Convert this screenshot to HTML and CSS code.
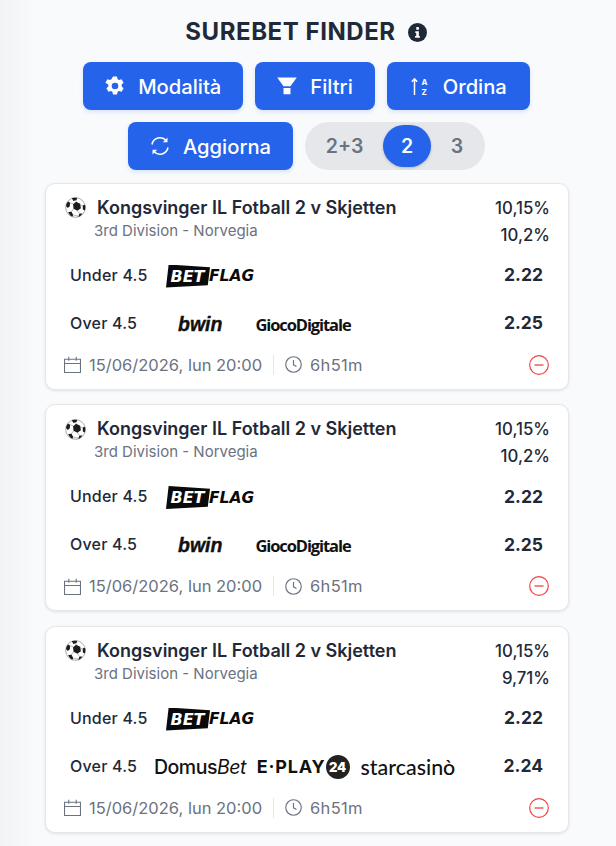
FILE: index.html
```html
<!DOCTYPE html>
<html lang="it">
<head>
<meta charset="utf-8">
<title>Surebet Finder</title>
<link rel="stylesheet" href="styles.css">
</head>
<body>
<svg class="defs" width="0" height="0" aria-hidden="true">
  <symbol id="ball" viewBox="0 0 20 20">
    <circle cx="10" cy="10" r="9.4" fill="#fff" stroke="#9a9a9a" stroke-width=".8"/>
    <path d="M10.500 4.500l4 2 .6 4.200-3.300 2.300-3.700-1.800-.4-4.400z" fill="#1c1c1c"/>
    <path d="M6.500 1.300C7.500.8 10 .6 11.500 1L11 2.800 8 3.800zM1 8.600C1.200 7 1.800 5.500 3 4.300L4.800 5.500 4.600 8.800 2.500 10.500zM19.200 7.800C19.600 9.500 19.400 11.500 18.800 12.800L17 12 16.900 8.400 18 7.300zM3 14.300L6.200 14.100 7.800 17.200 7 18.800C5.200 18 3.900 16.500 3 14.300zM16.500 15.600L13.800 15.800 12.600 18.800C14.200 18.500 15.600 17.400 16.500 15.600z" fill="#1c1c1c"/>
    <path d="M10.500 4.500V3M7.700 6.500L4.800 5.500M15 8l2 .4M8.100 11.200l-2 3M11.800 13l2 2.800M7.800 17.200l4.800 1" stroke="#777" stroke-width=".5" fill="none"/>
  </symbol>
  <symbol id="cal" viewBox="0 0 16 16">
    <path d="M.5 3h15v12.500H.5zM.5 7h15M4.500 .8v3.700M11.500 .8v3.700" fill="none" stroke="currentColor" stroke-width="1"/>
  </symbol>
  <symbol id="clock" viewBox="0 0 16 16">
    <circle cx="8" cy="8" r="7.300" fill="none" stroke="currentColor" stroke-width="1.100"/>
    <path d="M8 3.800v4.500l2.800 1.600" fill="none" stroke="currentColor" stroke-width="1.100"/>
  </symbol>
  <symbol id="minus" viewBox="0 0 20 20">
    <circle cx="10" cy="10" r="9.300" fill="none" stroke="currentColor" stroke-width="1.200"/>
    <path d="M5.500 10h9" stroke="currentColor" stroke-width="1.300"/>
  </symbol>
</svg>

<main class="page">
  <h1 class="title">SUREBET FINDER
    <svg class="info" viewBox="0 0 20 20"><circle cx="10" cy="10" r="10" fill="#1f2937"/><rect x="8.700" y="4.300" width="2.800" height="2.800" rx=".6" fill="#fff"/><path d="M7.700 8.700h3.700v5h1.100v1.800H7.500v-1.800h1.200v-3.200h-1z" fill="#fff"/></svg>
  </h1>

  <div class="toolbar">
    <button class="btn"><svg class="btn-icon" viewBox="0 0 20 20"><path fill="#fff" fill-rule="evenodd" d="M8 .6h4l.6 2.600 1.500.9 2.500-.8 2 3.500-1.900 1.800v1.800l1.900 1.800-2 3.500-2.500-.8-1.500.9-.6 2.600H8l-.6-2.600-1.500-.9-2.500.8-2-3.500 1.900-1.800V8.600L.4 6.800l2-3.500 2.500.8 1.500-.9zM10 6.700a3.300 3.300 0 1 0 0 6.600 3.300 3.300 0 0 0 0-6.600z"/></svg>Modalità</button>
    <button class="btn"><svg class="btn-icon" viewBox="0 0 20 20"><path fill="#fff" d="M.2 1.500h19.600l-6.300 8.700H6.500zM6.500 12h7v6.200h-7z"/></svg>Filtri</button>
    <button class="btn btn-sort"><svg class="btn-icon" viewBox="0 0 20 20"><path fill="none" stroke="#fff" stroke-width="1.500" d="M5.500 19V3M2.800 5.800L5.500 2.800 8.200 5.800"/><text class="az" x="12.500" y="8.500">A</text><text class="az" x="12.500" y="18.800">Z</text></svg>Ordina</button>
    <button class="btn"><svg class="btn-icon" viewBox="0 0 20 20"><path fill="none" stroke="#fff" stroke-width="1.500" d="M2 8.500A8.200 8.200 0 0 1 16.300 4.700M18 11.500A8.200 8.200 0 0 1 3.700 15.300"/><path fill="#fff" d="M17.500 1.500v4.700h-4.700zM2.500 18.500v-4.700h4.700z"/></svg>Aggiorna</button>
    <div class="segment">
      <span class="seg seg-wide">2+3</span>
      <span class="seg seg-on">2</span>
      <span class="seg seg-last">3</span>
    </div>
  </div>

  <section class="list">
    <article class="card">
      <div class="head">
        <div class="match">
          <div class="match-title"><svg class="ball"><use href="#ball"/></svg>Kongsvinger IL Fotball 2 v Skjetten</div>
          <div class="league">3rd Division - Norvegia</div>
        </div>
        <div class="pct"><span>10,15%</span><span>10,2%</span></div>
      </div>
      <div class="row">
        <span class="market">Under 4.5</span>
        <div class="books"><span class="betflag"><span class="bet">BET</span><span class="flag">FLAG</span></span></div>
        <span class="odd">2.22</span>
      </div>
      <div class="row">
        <span class="market">Over 4.5</span>
        <div class="books books-two"><span class="bwin">bwin</span><span class="gioco">GiocoDigitale</span></div>
        <span class="odd">2.25</span>
      </div>
      <div class="foot">
        <svg class="foot-icon cal-icon"><use href="#cal"/></svg><span>15/06/2026, lun 20:00</span>
        <i class="sep"></i>
        <svg class="foot-icon"><use href="#clock"/></svg><span class="left">6h51m</span>
        <svg class="remove"><use href="#minus"/></svg>
      </div>
    </article>

    <article class="card">
      <div class="head">
        <div class="match">
          <div class="match-title"><svg class="ball"><use href="#ball"/></svg>Kongsvinger IL Fotball 2 v Skjetten</div>
          <div class="league">3rd Division - Norvegia</div>
        </div>
        <div class="pct"><span>10,15%</span><span>10,2%</span></div>
      </div>
      <div class="row">
        <span class="market">Under 4.5</span>
        <div class="books"><span class="betflag"><span class="bet">BET</span><span class="flag">FLAG</span></span></div>
        <span class="odd">2.22</span>
      </div>
      <div class="row">
        <span class="market">Over 4.5</span>
        <div class="books books-two"><span class="bwin">bwin</span><span class="gioco">GiocoDigitale</span></div>
        <span class="odd">2.25</span>
      </div>
      <div class="foot">
        <svg class="foot-icon cal-icon"><use href="#cal"/></svg><span>15/06/2026, lun 20:00</span>
        <i class="sep"></i>
        <svg class="foot-icon"><use href="#clock"/></svg><span class="left">6h51m</span>
        <svg class="remove"><use href="#minus"/></svg>
      </div>
    </article>

    <article class="card">
      <div class="head">
        <div class="match">
          <div class="match-title"><svg class="ball"><use href="#ball"/></svg>Kongsvinger IL Fotball 2 v Skjetten</div>
          <div class="league">3rd Division - Norvegia</div>
        </div>
        <div class="pct"><span>10,15%</span><span>9,71%</span></div>
      </div>
      <div class="row">
        <span class="market">Under 4.5</span>
        <div class="books"><span class="betflag"><span class="bet">BET</span><span class="flag">FLAG</span></span></div>
        <span class="odd">2.22</span>
      </div>
      <div class="row">
        <span class="market">Over 4.5</span>
        <div class="books books-three"><span class="domus">Domus<em>Bet</em></span><span class="eplay">E·PLAY<b>24</b></span><span class="star">starcasinò</span></div>
        <span class="odd">2.24</span>
      </div>
      <div class="foot">
        <svg class="foot-icon cal-icon"><use href="#cal"/></svg><span>15/06/2026, lun 20:00</span>
        <i class="sep"></i>
        <svg class="foot-icon"><use href="#clock"/></svg><span class="left">6h51m</span>
        <svg class="remove"><use href="#minus"/></svg>
      </div>
    </article>
  </section>
</main>
</body>
</html>
```

FILE: styles.css
```css
* { box-sizing: border-box; }
html, body { height: 100%; }
body {
  margin: 0;
  overflow: hidden;
  background: linear-gradient(to right, #f1f3f5, #f8fafc 36px);
  font-family: Inter, "Liberation Sans", sans-serif;
  color: #1f2937;
}
.defs { position: absolute; }
.page { padding: 0 47px 0 45px; }
.title {
  margin: 0;
  padding: 18px 2px 0 0;
  height: 62px;
  display: flex;
  justify-content: center;
  align-items: flex-start;
  gap: 12px;
  font-size: 24px;
  line-height: 28px;
  font-weight: 700;
  letter-spacing: .55px;
  color: #1f2937;
}
.info { width: 19px; height: 19px; margin-top: 5px; }
.toolbar {
  display: flex;
  flex-wrap: wrap;
  justify-content: center;
  gap: 12px;
  margin: 0 -1.500px 0 -2.500px;
}
.btn {
  height: 48px;
  padding: 0 22px;
  display: inline-flex;
  align-items: center;
  gap: 13px;
  border: 0;
  border-radius: 8px;
  background: #2563eb;
  color: #fff;
  font: 500 20.200px Inter, "Liberation Sans", sans-serif;
  box-shadow: 0 2px 4px rgba(37, 99, 235, .15);
}
.btn-sort { padding-right: 23px; gap: 14px; }
.btn-icon { width: 20px; height: 20px; flex: none; }
.az { font: 700 8px Inter, sans-serif; fill: #fff; }
.segment {
  width: 180px;
  height: 48px;
  padding: 3px 6px;
  display: flex;
  align-items: center;
  border-radius: 24px;
  background: #e5e7eb;
}
.seg {
  text-align: center;
  color: #6b7280;
  font-size: 19.500px;
  font-weight: 600;
}
.seg-wide { width: 67px; margin-right: 5px; }
.seg-last { flex: 1; padding-left: 4px; }
.seg-on {
  width: 48px;
  height: 42px;
  line-height: 42px;
  border-radius: 21px;
  background: #2563eb;
  color: #fff;
  box-shadow: 0 1px 3px rgba(0, 0, 0, .2);
}
.list {
  display: flex;
  flex-direction: column;
  gap: 14.5px;
  margin-top: 12.500px;
}
.card {
  height: 207px;
  padding: 12px 18px 0 19px;
  background: #fff;
  border: 1px solid #e5e7eb;
  border-radius: 10px;
  box-shadow: 0 1px 3px rgba(0, 0, 0, .1);
}
.head { display: flex; justify-content: space-between; align-items: flex-start; height: 55px; }
.match-title {
  display: flex;
  align-items: center;
  gap: 11px;
  font-size: 18px;
  font-weight: 600;
  line-height: 24px;
  color: #1f2937;
}
.ball { width: 21px; height: 21px; flex: none; }
.league { margin: 1px 0 0 29px; font-size: 15px; line-height: 20px; color: #6b7280; }
.pct {
  display: flex;
  flex-direction: column;
  align-items: flex-end;
  font-size: 16.800px;
  font-weight: 500;
  line-height: 27px;
  margin-top: -1px;
}
.row {
  display: flex;
  align-items: center;
  height: 48px;
  padding: 0 6px 0 5px;
}
.market { width: 84px; flex: none; font-size: 16px; font-weight: 500; letter-spacing: .2px; color: #1f2937; }
.books { flex: 1; display: flex; align-items: center; gap: 33px; padding: 3px 0 0 12px; color: #111; }
.books-two { padding-left: 24px; }
.books-three { padding: 2px 0 0; gap: 11px; }
.odd {
  width: 46px;
  margin-right: 1px;
  flex: none;
  text-align: right;
  font-size: 17.500px;
  font-weight: 700;
  color: #1f2937;
}
.betflag {
  display: inline-flex;
  align-items: center;
  font-family: "DejaVu Sans", sans-serif;
  font-style: italic;
  font-weight: 700;
}
.bet {
  width: 44px;
  height: 23px;
  padding-right: 1px;
  background: #0a0a0a;
  color: #fff;
  font-size: 16px;
  line-height: 23px;
  text-align: center;
  clip-path: polygon(6% 0, 100% 12%, 95% 90%, 0 100%);
}
.flag { font-size: 15.500px; margin-left: -1px; color: #0a0a0a; }
.bwin { font: italic 700 19.500px "Liberation Sans", sans-serif; -webkit-text-stroke: .4px #111; }
.gioco { font: 700 16.500px "Open Sans", sans-serif; letter-spacing: -1.100px; }
.domus { font: 500 19.500px Inter, sans-serif; letter-spacing: -.5px; }
.domus em { font-weight: 400; }
.eplay { display: inline-flex; align-items: center; font: 700 18px Inter, sans-serif; letter-spacing: .8px; }
.eplay b {
  width: 24px;
  height: 24px;
  margin-left: 0;
  border-radius: 50%;
  background: #222;
  color: #fff;
  font-size: 13px;
  line-height: 24px;
  text-align: center;
  letter-spacing: 0;
}
.star { font: 500 21.400px Lato, sans-serif; }
.foot {
  display: flex;
  align-items: center;
  height: 28px;
  margin-top: 4px;
  font-size: 16.500px;
  color: #6b7280;
}
.foot-icon { width: 17px; height: 17px; flex: none; margin-right: 8px; color: #6b7280; }
.cal-icon { margin: 0 8px 0 -1px; }
.left { letter-spacing: .3px; }
.sep { width: 1px; height: 20px; margin: 0 11px; background: #e5e7eb; }
.remove { width: 20px; height: 20px; margin-left: auto; margin-right: 1px; color: #ef4444; }
```
